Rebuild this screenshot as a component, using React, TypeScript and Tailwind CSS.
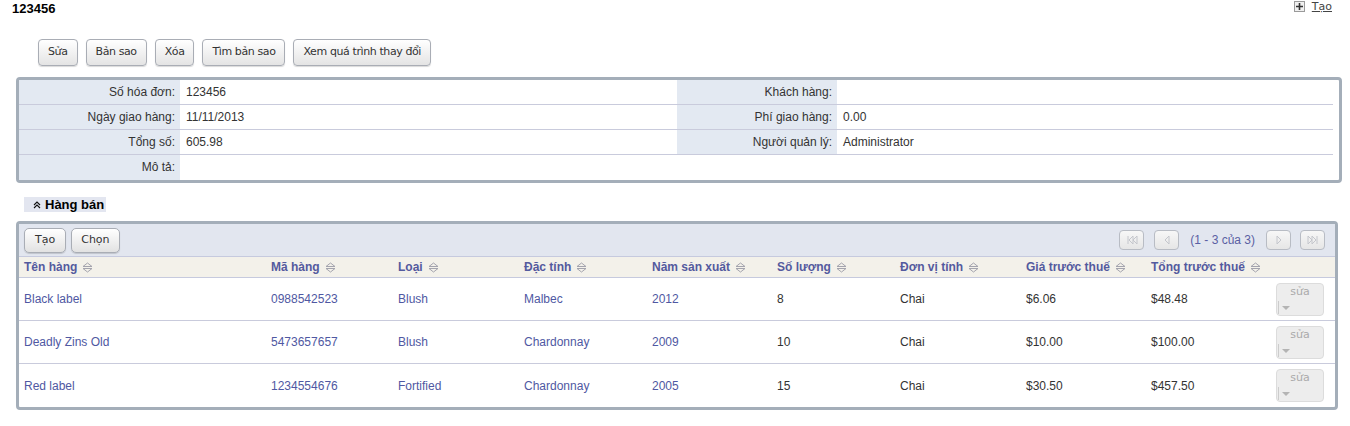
const rows = [
  { name: "Black label", code: "0988542523", type: "Blush", trait: "Malbec", year: "2012", qty: "8", unit: "Chai", price: "$6.06", total: "$48.48" },
  { name: "Deadly Zins Old", code: "5473657657", type: "Blush", trait: "Chardonnay", year: "2009", qty: "10", unit: "Chai", price: "$10.00", total: "$100.00" },
  { name: "Red label", code: "1234554676", type: "Fortified", trait: "Chardonnay", year: "2005", qty: "15", unit: "Chai", price: "$30.50", total: "$457.50" },
];

const headers = ["Tên hàng", "Mã hàng", "Loại", "Đặc tính", "Năm sản xuất", "Số lượng", "Đơn vị tính", "Giá trước thuế", "Tổng trước thuế"];

const cols = "grid grid-cols-[247px_127px_126px_128px_125px_123px_126px_125px_125px_1fr]";

function SortIcon() {
  return (
    <svg width="11" height="11" viewBox="0 0 11 11" className="ml-[5px] inline-block">
      <path d="M1 4.5 L5.5 1 L10 4.5 Z M1 6.5 L5.5 10 L10 6.5 Z" fill="none" stroke="#a4a4ae" strokeWidth="1" />
    </svg>
  );
}

function Btn({ children }: { children: React.ReactNode }) {
  return (
    <button className="h-[27px] px-[9px] rounded-[4px] border border-[#a9adb5] bg-gradient-to-b from-white to-[#e4e4e4] text-[11px] text-[#333] shadow-[0_1px_1px_rgba(0,0,0,0.15)] font-['DejaVu_Sans',sans-serif] tracking-[-0.4px]">
      {children}
    </button>
  );
}

function PageBtn({ kind }: { kind: "first" | "prev" | "next" | "last" }) {
  const c = "#c4c6cc";
  return (
    <div className="w-[25px] h-[20px] rounded-[4px] border border-[#b8bcc4] bg-gradient-to-b from-[#f7f7f7] to-[#e6e6e6] flex items-center justify-center">
      <svg width="12" height="10" viewBox="0 0 12 10">
        {kind === "first" && <path d="M2 1 V9 M7 1 L3 5 L7 9 Z M11 1 L7 5 L11 9 Z" fill="none" stroke={c} />}
        {kind === "prev" && <path d="M8 1 L4 5 L8 9 Z" fill="none" stroke={c} />}
        {kind === "next" && <path d="M4 1 L8 5 L4 9 Z" fill="none" stroke={c} />}
        {kind === "last" && <path d="M10 1 V9 M5 1 L9 5 L5 9 Z M1 1 L5 5 L1 9 Z" fill="none" stroke={c} />}
      </svg>
    </div>
  );
}

function InfoRow({ l1, v1, l2, v2, last }: { l1: string; v1: string; l2: string; v2: string; last?: boolean }) {
  return (
    <div className={`grid grid-cols-[161px_497px_160px_1fr] h-[25px] ${last ? "" : "border-b border-[#c9cbdc]"}`}>
      <div className="bg-[#e3e9f2] text-right pr-[5px] leading-[24px]">{l1}</div>
      <div className="pl-[6px] leading-[24px]">{v1}</div>
      <div className={`${last ? "" : "bg-[#e3e9f2]"} text-right pr-[5px] leading-[24px]`}>{l2}</div>
      <div className="pl-[6px] leading-[24px]">{v2}</div>
    </div>
  );
}

export default function App() {
  return (
    <div className="w-[1350px] h-[426px] bg-white font-['Liberation_Sans',Arial,sans-serif] text-[12px] text-[#333]">
      <div className="flex justify-between items-start">
        <h1 className="pl-[12px] pt-[1px] text-[13px] font-bold text-black leading-[15px]">123456</h1>
        <div className="flex items-center pr-[18px] pt-[1px]">
          <svg width="11" height="11" viewBox="0 0 11 11">
            <rect x="0.5" y="0.5" width="10" height="10" fill="#f0f0f0" stroke="#9a9a9a" />
            <path d="M5.5 2 V9 M2 5.5 H9" stroke="#333" strokeWidth="1.6" />
          </svg>
          <a className="ml-[7px] text-[11px] underline text-[#444] leading-[11px] font-['DejaVu_Sans',sans-serif]">Tạo</a>
        </div>
      </div>

      <div className="flex gap-[8px] pl-[38px] mt-[23px]">
        <Btn>Sửa</Btn>
        <Btn>Bản sao</Btn>
        <Btn>Xóa</Btn>
        <Btn>Tìm bản sao</Btn>
        <Btn>Xem quá trình thay đổi</Btn>
      </div>

      <div className="ml-[16px] mt-[11px] w-[1326px] border-[3px] border-[#a4aeb9] rounded-[4px] pr-[6px]">
        <InfoRow l1="Số hóa đơn:" v1="123456" l2="Khách hàng:" v2="" />
        <InfoRow l1="Ngày giao hàng:" v1="11/11/2013" l2="Phí giao hàng:" v2="0.00" />
        <InfoRow l1="Tổng số:" v1="605.98" l2="Người quản lý:" v2="Administrator" />
        <InfoRow l1="Mô tả:" v1="" l2="" v2="" last />
      </div>

      <div className="ml-[24px] mt-[14px] w-[82px] h-[15px] bg-[#e3e6f0] flex items-center pl-[9px]">
        <svg width="8" height="8" viewBox="0 0 8 8">
          <path d="M1 4 L4 1 L7 4 M1 7 L4 4 L7 7" fill="none" stroke="#111" strokeWidth="1.1" />
        </svg>
        <span className="ml-[4px] font-bold text-[13px] text-black">Hàng bán</span>
      </div>

      <div className="ml-[16px] mt-[9px] w-[1322px] border-[3px] border-[#a4aeb9] rounded-[4px]">
        <div className="h-[33px] bg-[#e2e6ef] border-b border-[#c6cade] flex items-center justify-between pl-[5px] pr-[10px]">
          <div className="flex gap-[5px]">
            <button className="h-[25px] px-[10px] rounded-[5px] border border-[#a9adb5] bg-gradient-to-b from-white to-[#e2e2e2] text-[11px] text-[#333] shadow-[0_1px_1px_rgba(0,0,0,0.15)] font-['DejaVu_Sans',sans-serif]">Tạo</button>
            <button className="h-[25px] px-[9px] rounded-[5px] border border-[#a9adb5] bg-gradient-to-b from-white to-[#e2e2e2] text-[11px] text-[#333] shadow-[0_1px_1px_rgba(0,0,0,0.15)] font-['DejaVu_Sans',sans-serif]">Chọn</button>
          </div>
          <div className="flex items-center">
            <PageBtn kind="first" />
            <div className="w-[10px]" />
            <PageBtn kind="prev" />
            <span className="mx-[11px] text-[#5a5fa3] text-[12px]">(1 - 3 của 3)</span>
            <PageBtn kind="next" />
            <div className="w-[9px]" />
            <PageBtn kind="last" />
          </div>
        </div>
        <div className={`${cols} h-[21px] bg-[#f3f1ea] border-b border-[#c6cade] items-center`}>
          {headers.map((h) => (
            <div key={h} className="pl-[5px] font-bold text-[#545a9e] flex items-center">
              {h}
              <SortIcon />
            </div>
          ))}
          <div />
        </div>
        {rows.map((r, i) => (
          <div key={r.code} className={`${cols} h-[43px] items-center ${i < rows.length - 1 ? "border-b border-[#c9cbdc]" : ""}`}>
            <div className="pl-[5px] text-[#4f58a2]">{r.name}</div>
            <div className="pl-[5px] text-[#4f58a2]">{r.code}</div>
            <div className="pl-[5px] text-[#4f58a2]">{r.type}</div>
            <div className="pl-[5px] text-[#4f58a2]">{r.trait}</div>
            <div className="pl-[5px] text-[#4f58a2]">{r.year}</div>
            <div className="pl-[5px]">{r.qty}</div>
            <div className="pl-[5px]">{r.unit}</div>
            <div className="pl-[5px]">{r.price}</div>
            <div className="pl-[5px]">{r.total}</div>
            <div className="pl-[5px]">
              <div className="w-[48px] h-[33px] rounded-[4px] border border-[#dcdcdc] bg-[#ededed] relative">
                <div className="text-center text-[11px] text-[#aaa] leading-[13px] pt-[1px] font-['DejaVu_Sans',sans-serif]">sửa</div>
                <div className="absolute left-[1px] top-[17px] h-[13px] border-l border-[#ccc]" />
                <svg width="8" height="5" viewBox="0 0 8 5" className="absolute left-[5px] top-[22px]">
                  <path d="M0 0 H8 L4 4 Z" fill="#b4b4b4" />
                </svg>
              </div>
            </div>
          </div>
        ))}
      </div>
    </div>
  );
}
